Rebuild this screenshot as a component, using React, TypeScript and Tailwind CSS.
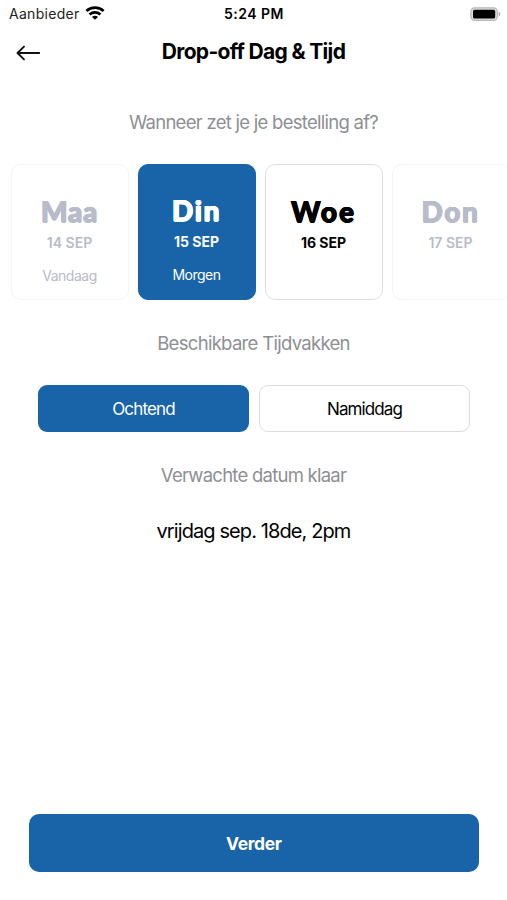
import clsx from "clsx";

type DayState = "disabled" | "selected" | "available";

interface Day {
  name: string;
  date: string;
  note?: string;
  state: DayState;
  nameClass: string;
}

const days: Day[] = [
  { name: "Maa", date: "14 SEP", note: "Vandaag", state: "disabled", nameClass: "tracking-[0.7px]" },
  { name: "Din", date: "15 SEP", note: "Morgen", state: "selected", nameClass: "tracking-[1.6px]" },
  { name: "Woe", date: "16 SEP", state: "available", nameClass: "tracking-[2px]" },
  { name: "Don", date: "17 SEP", state: "disabled", nameClass: "tracking-[1.6px]" },
];

function WifiIcon() {
  return (
    <svg width="20" height="15" viewBox="0 0 20 15" fill="none" stroke="#000" strokeWidth="2.7">
      <path d="M1.4 5C6.2 .6 13.8 .6 18.6 5" />
      <path d="M4.6 8.4c3-2.8 7.8-2.8 10.8 0" />
      <path d="M10 13.7 7 10.9c1.7-1.5 4.3-1.5 6 0Z" fill="#000" stroke="none" />
    </svg>
  );
}

function BatteryIcon() {
  return (
    <svg width="31" height="15" viewBox="0 0 31 15">
      <rect x=".9" y=".8" width="26.4" height="12.6" rx="3.8" fill="#ddd" stroke="#b9b9b9" strokeWidth="1.2" />
      <rect x="3" y="2.8" width="22.2" height="8.8" rx="1.6" fill="#000" />
      <path d="M28.7 4.8c2 .7 2 3.9 0 4.6Z" fill="#aaa" />
    </svg>
  );
}

function BackArrow() {
  return (
    <svg
      width="26"
      height="18"
      viewBox="0 0 26 18"
      fill="none"
      stroke="#111"
      strokeWidth="1.9"
      strokeLinecap="round"
      strokeLinejoin="round"
    >
      <path d="M8 2.6 1.5 9 8 15.4M1.8 9h21.4" />
    </svg>
  );
}

function DayCard({ day }: { day: Day }) {
  return (
    <button
      className={clsx(
        "flex h-[136px] w-[118px] shrink-0 flex-col items-center rounded-[10px] border",
        day.state === "disabled" && "border-[#f5f5f6] bg-white text-[#b8bbc9]",
        day.state === "selected" && "border-[#1964a8] bg-[#1964a8] text-white",
        day.state === "available" && "border-[#dedede] bg-white text-black",
      )}
    >
      <span
        className={clsx(
          "font-['Lato','Open_Sans',sans-serif] text-[28px] leading-8 font-black [text-shadow:0.6px_0_0_currentColor,-0.6px_0_0_currentColor,0_0.5px_0_currentColor,0_-0.5px_0_currentColor]",
          day.state === "selected" ? "mt-[29px]" : "mt-[30px]",
          day.nameClass,
        )}
      >
        {day.name}
      </span>
      <span
        className={clsx("mt-1.5 text-[14px] leading-5 tracking-[0px]", day.state === "disabled" ? "font-semibold" : "font-bold")}
      >
        {day.date}
      </span>
      {day.note && <span className="mt-[13px] text-[14px] leading-5 tracking-[-0.5px]">{day.note}</span>}
    </button>
  );
}

export default function App() {
  return (
    <div className="flex h-[900px] w-[507px] flex-col overflow-hidden bg-white font-['Inter','Liberation_Sans',sans-serif] text-black">
      <div className="grid h-7 shrink-0 grid-cols-3 items-center pr-1.5 pl-[9px]">
        <div className="flex items-center gap-[5px]">
          <span className="text-[14px] leading-7 tracking-[0.3px] text-[#222]">Aanbieder</span>
          <span className="-mt-0.5">
            <WifiIcon />
          </span>
        </div>
        <span className="-ml-0.5 text-center text-[14px] leading-7 font-semibold tracking-[0.5px]">5:24 PM</span>
        <div className="flex justify-end">
          <BatteryIcon />
        </div>
      </div>

      <header className="grid h-[46px] shrink-0 grid-cols-[80px_1fr_80px] items-center">
        <button className="mt-1 ml-4" aria-label="Terug">
          <BackArrow />
        </button>
        <h1 className="pt-0.5 text-center text-[21px] leading-[44px] font-bold tracking-[-0.67px] whitespace-nowrap">
          Drop-off Dag &amp; Tijd
        </h1>
      </header>

      <main className="flex flex-1 flex-col">
        <h2 className="mt-[34px] text-center text-[18.5px] leading-7 tracking-[-0.73px] text-[#8e8f94]">
          Wanneer zet je je bestelling af?
        </h2>

        <div className="mt-7 flex gap-[9px] pl-[10.5px]">
          {days.map((day) => (
            <DayCard key={day.date} day={day} />
          ))}
        </div>

        <h2 className="mt-[29px] text-center text-[18.5px] leading-7 tracking-[-0.7px] text-[#8e8f94]">
          Beschikbare Tijdvakken
        </h2>

        <div className="mt-7 mr-[37px] ml-[38px] grid grid-cols-2 gap-2.5">
          <button className="h-[47px] rounded-[9px] bg-[#1964a8] pt-0.5 text-[17px] tracking-[-0.85px] text-white">
            Ochtend
          </button>
          <button className="h-[47px] rounded-[9px] border border-[#dedede] bg-white pt-0.5 text-[17px] tracking-[-0.9px]">
            Namiddag
          </button>
        </div>

        <h2 className="mt-[29px] text-center text-[18.5px] leading-7 tracking-[-0.75px] text-[#8e8f94]">
          Verwachte datum klaar
        </h2>
        <p className="mt-[28px] text-center text-[20px] leading-7 tracking-[-0.9px]">vrijdag sep. 18de, 2pm</p>
      </main>

      <footer className="shrink-0 pr-7 pb-7 pl-[28.5px]">
        <button className="h-[58px] w-full rounded-[10px] bg-[#1964a8] pt-0.5 text-[17.5px] font-bold tracking-[-0.4px] text-white">
          Verder
        </button>
      </footer>
    </div>
  );
}
